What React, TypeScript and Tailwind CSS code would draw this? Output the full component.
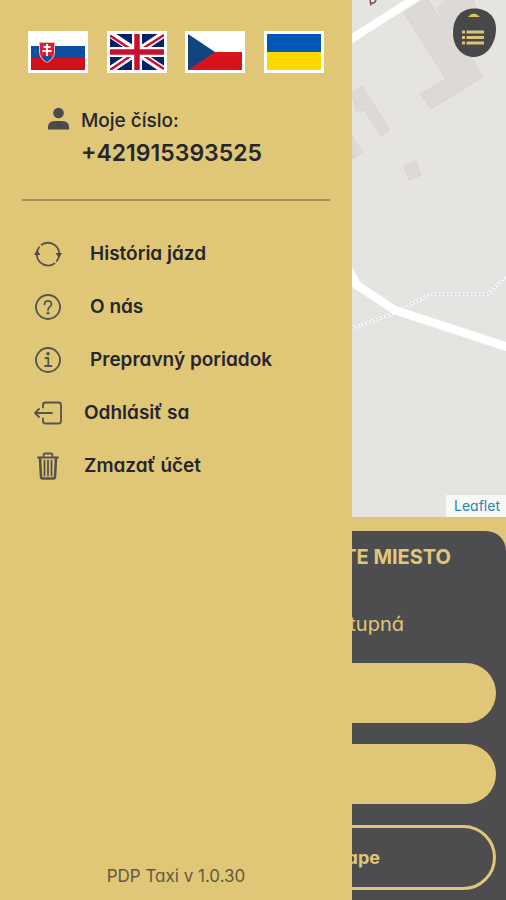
import type { ReactNode } from "react";

const stroke = {
  fill: "none",
  stroke: "#55544a",
  strokeWidth: 1.8,
  strokeLinecap: "round" as const,
  strokeLinejoin: "round" as const,
};

function HistoryIcon() {
  return (
    <svg viewBox="0 0 28 28" className="size-7" aria-hidden="true" {...stroke}>
      <path d="M2.800 13A11.300 11.300 0 0 1 5.200 7.200M7.600 4.800A11.300 11.300 0 0 1 25.200 13" />
      <path d="M2.800 15A11.300 11.300 0 0 0 20.400 23.500M22.800 21A11.300 11.300 0 0 0 25.200 15" />
      <path d="M0 15L3 10L6.500 15ZM21.500 13L28 13L25 18Z" fill="#4b4a45" stroke="none" />
    </svg>
  );
}

function HelpIcon() {
  return (
    <svg viewBox="0 0 28 28" className="size-7" aria-hidden="true" {...stroke}>
      <circle cx="14" cy="14" r="12" />
      <path d="M10.500 11.300C10.500 6.800 17.500 6.800 17.500 11C17.500 13.800 14 13.600 14 17" />
      <circle cx="14" cy="20" r="0.600" />
    </svg>
  );
}

function InfoIcon() {
  return (
    <svg viewBox="0 0 28 28" className="size-7" aria-hidden="true" {...stroke}>
      <circle cx="14" cy="14" r="12" />
      <path d="M11.500 12H14.300V20M11 20H17.500" />
      <circle cx="14" cy="7.800" r="0.900" fill="#55544a" />
    </svg>
  );
}

function LogoutIcon() {
  return (
    <svg viewBox="0 0 28 28" className="size-7" aria-hidden="true" {...stroke}>
      <path d="M9 8.500V6Q9 3.500 11.500 3.500H24.500Q27 3.500 27 6V22Q27 24.500 24.500 24.500H11.500Q9 24.500 9 22V19.500" />
      <path d="M18 14H1M5 10L1 14L5 18" />
    </svg>
  );
}

function TrashIcon() {
  return (
    <svg viewBox="0 0 28 28" className="size-7" aria-hidden="true" {...stroke}>
      <path d="M4 5.500H24M9.500 5V3Q9.500 1.500 11 1.500H17Q18.500 1.500 18.500 3V5" strokeWidth="1.800" />
      <path d="M6 6L7 25Q7.100 26.500 8.500 26.500H19.500Q20.900 26.500 21 25L22 6" strokeWidth="2.600" />
      <path d="M10.500 8.500V23.500M14 8.500V23.500M17.500 8.500V23.500" strokeWidth="1.800" />
    </svg>
  );
}

function Flag({ label, children }: { label: string; children: ReactNode }) {
  return (
    <button type="button" aria-label={label} className="h-[42px] w-[60px] bg-white p-[3px]">
      <svg viewBox="0 0 54 36" preserveAspectRatio="none" className="block size-full" aria-hidden="true">
        {children}
      </svg>
    </button>
  );
}

function Flags() {
  return (
    <div className="flex justify-between px-7">
      <Flag label="Slovenčina">
        <path fill="#fff" d="M0 0H54V12H0Z" />
        <path fill="#0b4ea2" d="M0 12H54V24H0Z" />
        <path fill="#d2101c" d="M0 24H54V36H0Z" />
        <path fill="#e9b8bd" d="M8 8H24V18Q24 25 16 29Q8 25 8 18Z" />
        <path fill="#df1f2d" d="M9 9H23V18Q23 24 16 28Q9 24 9 18Z" />
        <path fill="#0b4ea2" d="M11 23Q13 20 16 22Q19 20 21 23Q19 26 16 28Q13 26 11 23Z" />
        <path stroke="#fff" strokeWidth="1.800" d="M16 10V22M12.500 13H19.500M11.500 17H20.500" />
      </Flag>
      <Flag label="English">
        <path fill="#012169" d="M0 0H54V36H0Z" />
        <path stroke="#fff" strokeWidth="7" d="M0 0L54 36M54 0L0 36" />
        <path stroke="#c8102e" strokeWidth="2.500" d="M0 1.500L22 16M54 1L32 15M0 36L22 21M54 35L32 20.500" />
        <path stroke="#fff" strokeWidth="10" d="M27 0V36M0 18H54" />
        <path stroke="#c8102e" strokeWidth="5.500" d="M27 0V36M0 18H54" />
      </Flag>
      <Flag label="Čeština">
        <path fill="#fff" d="M0 0H54V18H0Z" />
        <path fill="#d7141a" d="M0 18H54V36H0Z" />
        <path fill="#11457e" d="M0 0L27 18L0 36Z" />
      </Flag>
      <Flag label="Українська">
        <path fill="#0057b7" d="M0 0H54V18H0Z" />
        <path fill="#ffd700" d="M0 18H54V36H0Z" />
      </Flag>
    </div>
  );
}

function MapView() {
  return (
    <section aria-label="Mapa" className="relative h-[517px] overflow-hidden bg-[#e5e4e0]">
      <svg
        viewBox="0 0 506 517"
        preserveAspectRatio="xMaxYMin slice"
        className="block size-full"
        aria-hidden="true"
      >
        <g fill="#dcd9d6" stroke="#d5d1ce" strokeWidth="0.700">
          <path d="M404 13L423 0H428L454 38L465 47L483 77L431 109L420 94L446 79Z" />
          <path d="M437 8L446 0H474L478 22L449 30Z" />
          <path d="M352 93L362 86L390 130L381 136L364 110L356 111Z" />
          <path d="M352 136L363 152L352 159Z" />
          <path d="M404 166L416 161L421 175L409 180Z" />
        </g>
        <path d="M340 46L422 -6" stroke="#fff" strokeWidth="8" />
        <path
          d="M352 328L395 313L430 294H488L506 277"
          fill="none"
          stroke="#f6f6fa"
          strokeWidth="3"
        />
        <path
          d="M352 328L395 313L430 294H488L506 277"
          fill="none"
          stroke="#c6c6e2"
          strokeWidth="1.300"
          strokeDasharray="2 2"
        />
        <path d="M352 267L360 282L396 306L506 342V351L393 314L352 287Z" fill="#fff" />
        <path d="M371 5.500L370 0M371 3Q375 4 376 0" fill="none" stroke="#7c5148" strokeWidth="1.400" />
      </svg>
      <a
        href="#leaflet"
        className="absolute right-0 bottom-0 bg-[#f8f8f7] pr-[6px] pl-2 text-sm leading-[22px] text-[#2f83ad]"
      >
        Leaflet
      </a>
    </section>
  );
}

function OrderPanel() {
  return (
    <section className="mt-[14px] flex grow flex-col rounded-t-[20px] bg-[#4d4d4f] px-[10px] text-right text-[#e0c778]">
      <h1 className="pt-3 pr-[45px] text-xl leading-7 font-bold">ZADAJTE MIESTO</h1>
      <p className="mt-[39px] pr-[92px] text-xl leading-7">Nedostupná</p>
      <input
        aria-label="Odkiaľ"
        className="mt-[25px] h-[60px] w-full rounded-full bg-[#e0c778] px-6"
      />
      <input
        aria-label="Kam"
        className="mt-[21px] h-[60px] w-full rounded-full bg-[#e0c778] px-6"
      />
      <button
        type="button"
        className="mt-[21px] mb-[10px] h-[65px] w-full rounded-full border-3 border-[#e0c778] pr-[113px] text-right text-lg font-bold"
      >
        Na mape
      </button>
    </section>
  );
}

const items = [
  { label: "História jázd", icon: <HistoryIcon />, gap: "gap-7" },
  { label: "O nás", icon: <HelpIcon />, gap: "gap-7" },
  { label: "Prepravný poriadok", icon: <InfoIcon />, gap: "gap-7" },
  { label: "Odhlásiť sa", icon: <LogoutIcon />, gap: "gap-[22px]" },
  { label: "Zmazať účet", icon: <TrashIcon />, gap: "gap-[22px]" },
];

function Drawer() {
  return (
    <aside className="absolute inset-y-0 left-0 flex w-[352px] flex-col bg-[#e0c778] pt-[31px] text-[#25262e]">
      <Flags />
      <div className="mt-8 flex gap-3 pl-12">
        <svg viewBox="0 0 21 23" className="mt-[2px] h-[23px] w-[21px]" fill="#4b4a4c" aria-hidden="true">
          <circle cx="10.500" cy="6" r="5.300" />
          <path d="M0 22.500V20Q0 14 7 14H14Q21 14 21 20V22.500Z" />
        </svg>
        <div>
          <p className="text-[19px] leading-8 font-medium">Moje číslo:</p>
          <p className="text-[23px] leading-8 font-semibold">+421915393525</p>
        </div>
      </div>
      <hr className="mx-[22px] mt-[30px] border-t-2 border-[#a28f59]" />
      <nav className="mt-[26px]">
        <ul>
          {items.map(({ label, icon, gap }) => (
            <li key={label}>
              <a href="#menu" className={`flex h-[53px] items-center pl-[34px] ${gap}`}>
                {icon}
                <span className="text-[19px] leading-6 font-semibold">{label}</span>
              </a>
            </li>
          ))}
        </ul>
      </nav>
      <p className="mt-auto pb-3 text-center text-[17px] leading-6 text-[#625a3e]">PDP Taxi v 1.0.30</p>
    </aside>
  );
}

export default function App() {
  return (
    <div className="relative flex min-h-screen flex-col overflow-hidden bg-[#e0c778] font-['Inter','Noto_Sans',sans-serif] [font-feature-settings:'cv11']">
      <MapView />
      <OrderPanel />
      <Drawer />
      <button type="button" aria-label="Menu" className="absolute top-2 right-[10px] h-[49px] w-11">
        <svg viewBox="0 0 44 49" className="block size-full" aria-hidden="true">
          <path
            fill="#48484a"
            d="M22 0.500C35 0.500 44 8 44 21C44 35 35 49 22 49C10 49 1 39 1 25C1 10 9 0.500 22 0.500Z"
          />
          <path fill="#e2c455" d="M16 9Q21.500 2 28 9Z" />
          <path stroke="#dcc377" strokeWidth="3" d="M10 24H13M14.500 24H32M10 29.500H13M14.500 29.500H32M10 35H13M14.500 35H32" />
        </svg>
      </button>
    </div>
  );
}
